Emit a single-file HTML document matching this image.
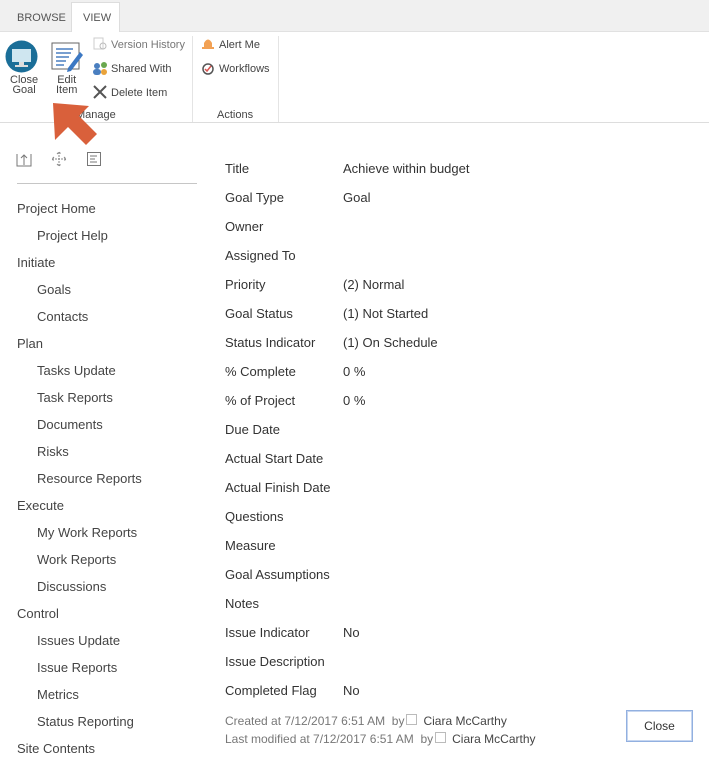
<!DOCTYPE html>
<html><head><style>
body{margin:0;width:709px;height:781px;background:#fff;font-family:"Liberation Sans",sans-serif;color:#444;position:relative;overflow:hidden}
.a{position:absolute;white-space:nowrap}
.tabs{position:absolute;left:0;top:0;width:709px;height:31px;background:#f0f0f0;border-bottom:1px solid #e1e1e1}
.rb{position:absolute;left:0;top:32px;width:709px;height:90px;border-bottom:1px solid #ddd;background:#fff}
.s{font-size:11px;color:#444}
.f{font-size:13px;color:#333}
.n{font-size:13px;color:#444}
</style></head><body>
<div class="tabs"></div>
<div class="a s" style="left:17px;top:12px;color:#555">BROWSE</div>
<div class="a" style="left:71px;top:2px;width:47px;height:30px;background:#fff;border:1px solid #ddd;border-bottom:none"></div>
<div class="a s" style="left:83px;top:12px;color:#555">VIEW</div>
<div class="rb"></div>
<div class="a" style="left:192px;top:36px;width:1px;height:86px;background:#e4e4e4"></div>
<div class="a" style="left:278px;top:36px;width:1px;height:86px;background:#e4e4e4"></div>
<svg class="a" style="left:5px;top:40px" width="33" height="33"><circle cx="16.5" cy="16.5" r="16" fill="#1a6e98"/><rect x="7" y="9" width="19" height="13" fill="#cfe6f0"/><rect x="14" y="22" width="5" height="3" fill="#ddd"/><rect x="10" y="25" width="13" height="2" fill="#ddd"/></svg>
<div class="a s" style="left:10px;top:75px;line-height:10px;text-align:center">Close<br>Goal</div>
<svg class="a" style="left:51px;top:42px" width="32" height="30"><rect x="1" y="1" width="27" height="26" fill="#fff" stroke="#666"/><g stroke="#4a7fc0" stroke-width="1.5"><line x1="5" y1="7" x2="22" y2="7"/><line x1="5" y1="11" x2="20" y2="11"/><line x1="5" y1="15" x2="18" y2="15"/><line x1="5" y1="19" x2="15" y2="19"/><line x1="5" y1="23" x2="13" y2="23"/></g><path d="M17 26 L29 10 L32 13 L20 29 L16 30Z" fill="#3c78c3"/></svg>
<div class="a s" style="left:56px;top:75px;line-height:10px;text-align:center">Edit<br>Item</div>
<svg class="a" style="left:93px;top:37px" width="15" height="15"><rect x="1" y="1" width="9" height="11" fill="none" stroke="#ccc"/><circle cx="10" cy="9" r="3" fill="none" stroke="#bbb"/></svg>
<div class="a s" style="left:111px;top:39px;color:#777">Version History</div>
<svg class="a" style="left:92px;top:61px" width="16" height="16"><circle cx="5" cy="5" r="3" fill="#4a7fc0"/><circle cx="12" cy="4" r="3" fill="#6aa84f"/><rect x="1" y="8" width="8" height="6" rx="3" fill="#4a7fc0"/><circle cx="12" cy="11" r="3" fill="#e9a33b"/></svg>
<div class="a s" style="left:111px;top:63px">Shared With</div>
<svg class="a" style="left:93px;top:85px" width="14" height="14"><path d="M1 1L13 13M13 1L1 13" stroke="#555" stroke-width="2"/></svg>
<div class="a s" style="left:111px;top:87px">Delete Item</div>
<div class="a s" style="left:76px;top:109px">Manage</div>
<svg class="a" style="left:201px;top:37px" width="14" height="14"><path d="M3 11 L3 6 Q7 -1 11 6 L11 11Z" fill="#f2a154"/><rect x="1" y="10" width="12" height="2" fill="#f2a154"/></svg>
<div class="a s" style="left:219px;top:39px">Alert Me</div>
<svg class="a" style="left:201px;top:62px" width="14" height="14"><circle cx="7" cy="7" r="5" fill="none" stroke="#555" stroke-width="1.5"/><path d="M4 7 L6 9 L10 4" stroke="#d9534f" stroke-width="1.5" fill="none"/></svg>
<div class="a s" style="left:219px;top:63px">Workflows</div>
<div class="a s" style="left:217px;top:109px">Actions</div>
<svg class="a" style="left:53px;top:103px" width="50" height="45"><path d="M0 0 L36 3 L26 13 L44 31 L33 42 L15 24 L2 37 Z" fill="#d9603b"/></svg>
<svg class="a" style="left:16px;top:151px" width="16" height="16"><path d="M1 3V15H15V3M8 14V4M5 7L8 4L11 7" fill="none" stroke="#777"/></svg>
<svg class="a" style="left:51px;top:151px" width="16" height="16"><path d="M8 1V15M1 8H15M6 3L8 1L10 3M6 13L8 15L10 13M3 6L1 8L3 10M13 6L15 8L13 10" fill="none" stroke="#888" stroke-dasharray="2 1"/></svg>
<svg class="a" style="left:86px;top:151px" width="16" height="16"><rect x="1.5" y="1.5" width="13" height="13" fill="none" stroke="#777"/><path d="M4 5H11M4 8H9M4 11H11" stroke="#777"/></svg>
<div class="a" style="left:17px;top:183px;width:180px;height:1px;background:#c6c6c6"></div>
<div class="a n" style="left:17px;top:201px">Project Home</div>
<div class="a n" style="left:37px;top:228px">Project Help</div>
<div class="a n" style="left:17px;top:255px">Initiate</div>
<div class="a n" style="left:37px;top:282px">Goals</div>
<div class="a n" style="left:37px;top:309px">Contacts</div>
<div class="a n" style="left:17px;top:336px">Plan</div>
<div class="a n" style="left:37px;top:363px">Tasks Update</div>
<div class="a n" style="left:37px;top:390px">Task Reports</div>
<div class="a n" style="left:37px;top:417px">Documents</div>
<div class="a n" style="left:37px;top:444px">Risks</div>
<div class="a n" style="left:37px;top:471px">Resource Reports</div>
<div class="a n" style="left:17px;top:498px">Execute</div>
<div class="a n" style="left:37px;top:525px">My Work Reports</div>
<div class="a n" style="left:37px;top:552px">Work Reports</div>
<div class="a n" style="left:37px;top:579px">Discussions</div>
<div class="a n" style="left:17px;top:606px">Control</div>
<div class="a n" style="left:37px;top:633px">Issues Update</div>
<div class="a n" style="left:37px;top:660px">Issue Reports</div>
<div class="a n" style="left:37px;top:687px">Metrics</div>
<div class="a n" style="left:37px;top:714px">Status Reporting</div>
<div class="a n" style="left:17px;top:741px">Site Contents</div>
<div class="a f" style="left:225px;top:154px;line-height:29px">Title<br>Goal Type<br>Owner<br>Assigned To<br>Priority<br>Goal Status<br>Status Indicator<br>% Complete<br>% of Project<br>Due Date<br>Actual Start Date<br>Actual Finish Date<br>Questions<br>Measure<br>Goal Assumptions<br>Notes<br>Issue Indicator<br>Issue Description<br>Completed Flag</div>
<div class="a f" style="left:343px;top:154px;line-height:29px">Achieve within budget<br>Goal<br><br><br>(2) Normal<br>(1) Not Started<br>(1) On Schedule<br>0 %<br>0 %<br><br><br><br><br><br><br><br>No<br><br>No</div>
<div class="a" style="left:225px;top:712px;font-size:12px;color:#777;line-height:18px">Created at 7/12/2017 6:51 AM &nbsp;by<span style="display:inline-block;width:9px;height:9px;border:1px solid #bbb;margin:0 6px 0 2px"></span><span style="color:#444">Ciara McCarthy</span><br>Last modified at 7/12/2017 6:51 AM &nbsp;by<span style="display:inline-block;width:9px;height:9px;border:1px solid #bbb;margin:0 6px 0 2px"></span><span style="color:#444">Ciara McCarthy</span></div>
<div class="a" style="left:626px;top:710px;width:65px;height:30px;border:1px solid #92b0e0;box-shadow:0 0 0 1px #c6d6f0 inset;font-size:12px;color:#333;text-align:center;line-height:30px">Close</div>
</body></html>
